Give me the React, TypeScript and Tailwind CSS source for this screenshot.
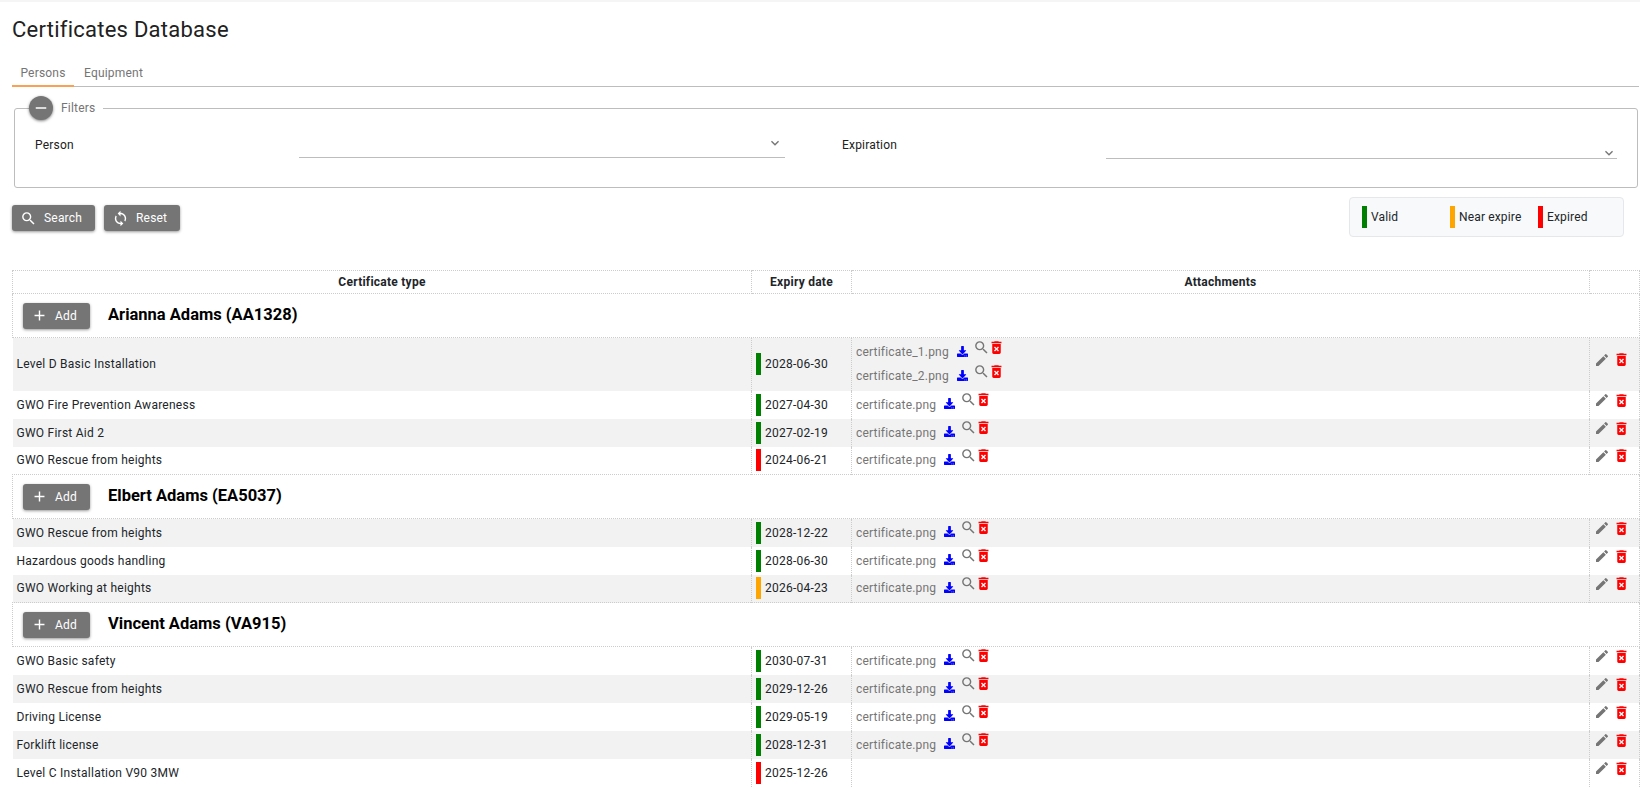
import React from "react";
import { MdAdd, MdDeleteForever, MdEdit, MdRemove, MdSearch, MdSync, MdKeyboardArrowDown } from "react-icons/md";
import { FaDownload } from "react-icons/fa";

type Row = { name: string; status: "g" | "o" | "r"; date: string; files: string[]; gray: boolean };
type Group = { person: string; rows: Row[] };

const barClass = { g: "bg-[#008000]", o: "bg-[#ffa500]", r: "bg-[#ff0000]" };

const groups: Group[] = [
  {
    person: "Arianna Adams (AA1328)",
    rows: [
      { name: "Level D Basic Installation", status: "g", date: "2028-06-30", files: ["certificate_1.png", "certificate_2.png"], gray: true },
      { name: "GWO Fire Prevention Awareness", status: "g", date: "2027-04-30", files: ["certificate.png"], gray: false },
      { name: "GWO First Aid 2", status: "g", date: "2027-02-19", files: ["certificate.png"], gray: true },
      { name: "GWO Rescue from heights", status: "r", date: "2024-06-21", files: ["certificate.png"], gray: false },
    ],
  },
  {
    person: "Elbert Adams (EA5037)",
    rows: [
      { name: "GWO Rescue from heights", status: "g", date: "2028-12-22", files: ["certificate.png"], gray: true },
      { name: "Hazardous goods handling", status: "g", date: "2028-06-30", files: ["certificate.png"], gray: false },
      { name: "GWO Working at heights", status: "o", date: "2026-04-23", files: ["certificate.png"], gray: true },
    ],
  },
  {
    person: "Vincent Adams (VA915)",
    rows: [
      { name: "GWO Basic safety", status: "g", date: "2030-07-31", files: ["certificate.png"], gray: false },
      { name: "GWO Rescue from heights", status: "g", date: "2029-12-26", files: ["certificate.png"], gray: true },
      { name: "Driving License", status: "g", date: "2029-05-19", files: ["certificate.png"], gray: false },
      { name: "Forklift license", status: "g", date: "2028-12-31", files: ["certificate.png"], gray: true },
      { name: "Level C Installation V90 3MW", status: "r", date: "2025-12-26", files: [], gray: false },
    ],
  },
];

function Btn({ icon, label, w }: { icon: React.ReactNode; label: string; w: string }) {
  return (
    <button className={`flex h-[26px] items-center gap-[7px] rounded-[3px] bg-[#757575] pl-[8px] text-[12px] tracking-[0.2px] text-white shadow-[0_1px_3px_rgba(0,0,0,0.4)] ${w}`}>
      {icon}
      <span>{label}</span>
    </button>
  );
}

function File({ name }: { name: string }) {
  return (
    <div className="flex h-[24px] items-center">
      <span className="text-[12px] tracking-[0.2px] text-[#757575]">{name}</span>
      <FaDownload className="ml-[8px] -mt-[2px] text-[#0000ff]" size={11} />
      <MdSearch className="ml-[5px] -mt-[10px] text-[#757575]" size={17} />
      <MdDeleteForever className="-ml-[2px] -mt-[10px] text-[#ff0000]" size={17} />
    </div>
  );
}

export default function App() {
  return (
    <div className="h-[787px] overflow-hidden bg-white font-['Roboto',sans-serif] text-[#212529]">
      <div className="h-[2px] bg-[#f5f5f5]" />
      <div className="pl-[12px] pr-[1px]">
        <h1 className="mt-[14px] h-[28px] text-[22px] leading-[28px] tracking-[0.25px] text-[#212121]">Certificates Database</h1>
        <div className="mt-[16px] flex h-[27px] border-b border-[#bdbdbd] text-[12px] tracking-[0.2px] text-[#757575]">
          <div className="flex h-[27px] w-[62px] items-center justify-center border-b-2 border-[#f9a155] pt-[1px]">Persons</div>
          <div className="flex h-[26px] w-[79px] items-center justify-center">Equipment</div>
        </div>

        <fieldset className="ml-[2px] mr-[2px] mt-[15px] h-[86px] rounded-[3px] border border-[#bdbdbd] px-[20px]">
          <legend className="-ml-[6px] flex h-[12px] items-center pr-[8px]">
            <span className="flex h-[24px] w-[24px] items-center justify-center rounded-full bg-[#757575] text-white shadow-[0_1px_3px_rgba(0,0,0,0.5)]">
              <MdRemove size={18} />
            </span>
            <span className="ml-[8px] text-[12px] tracking-[0.2px] text-[#757575]">Filters</span>
          </legend>
          <div className="flex text-[12px] tracking-[0.2px] text-[#212121]">
            <div className="flex w-[807px]">
              <div className="mt-[22px] w-[264px]">Person</div>
              <div className="mt-[11px] flex h-[33px] w-[486px] items-start justify-end border-b border-[#bdbdbd] pr-[2px] pt-[10px]">
                <MdKeyboardArrowDown className="text-[#757575]" size={16} />
              </div>
            </div>
            <div className="flex">
              <div className="mt-[22px] w-[264px]">Expiration</div>
              <div className="mt-[11px] h-[34px] w-[511px] border-b border-[#bdbdbd]">
                <div className="flex justify-end pt-[20px]">
                  <MdKeyboardArrowDown className="text-[#757575]" size={16} />
                </div>
              </div>
            </div>
          </div>
        </fieldset>

        <div className="mt-[9px] flex items-start justify-between pr-[15px]">
          <div className="mt-[8px] flex gap-[9px]">
            <Btn w="w-[83px]" icon={<MdSearch size={17} />} label="Search" />
            <Btn w="w-[76px]" icon={<MdSync size={17} />} label="Reset" />
          </div>
          <div className="flex h-[40px] w-[275px] items-center rounded-[4px] border border-[#e5e7eb] bg-[#f8f9fa] pl-[12px] text-[12px] tracking-[0.15px]">
            <div className="flex w-[88px] items-center gap-[4px]"><span className="h-[22px] w-[5px] bg-[#008000]" />Valid</div>
            <div className="flex w-[88px] items-center gap-[4px]"><span className="h-[22px] w-[5px] bg-[#ffa500]" />Near expire</div>
            <div className="flex items-center gap-[4px]"><span className="h-[22px] w-[5px] bg-[#ff0000]" />Expired</div>
          </div>
        </div>

        <table className="mt-[33px] w-[1627px] table-fixed border-collapse text-[12px] tracking-[0.25px]">
          <colgroup>
            <col className="w-[739px]" />
            <col className="w-[100px]" />
            <col className="w-[738px]" />
            <col className="w-[50px]" />
          </colgroup>
          <thead>
            <tr className="h-[23px] font-bold">
              <th className="border border-dotted border-[#ccc] text-[12px] font-bold">Certificate type</th>
              <th className="border border-dotted border-[#ccc] font-bold">Expiry date</th>
              <th className="border border-dotted border-[#ccc] font-bold">Attachments</th>
              <th className="border border-dotted border-[#ccc]" />
            </tr>
          </thead>
          {groups.map((g) => (
            <tbody key={g.person}>
              <tr className="h-[44px]">
                <td colSpan={4} className="border border-dotted border-[#ccc] pl-[10px]">
                  <div className="flex items-center">
                    <Btn w="w-[67px]" icon={<MdAdd size={17} />} label="Add" />
                    <span className="ml-[18px] text-[16.5px] font-bold tracking-normal text-black">{g.person}</span>
                  </div>
                </td>
              </tr>
              {g.rows.map((r) => (
                <tr key={r.name} className={r.gray ? "bg-[#f2f2f2]" : "bg-white"}>
                  <td className={`pl-[4px] ${r.files.length > 1 ? "h-[53px]" : "h-[28px]"}`}>{r.name}</td>
                  <td className="border-x border-dotted border-[#ccc] pl-[4px]">
                    <div className="flex items-center gap-[3px]">
                      <span className={`h-[22px] w-[5px] ${barClass[r.status]}`} />
                      <span className="pl-[1px]">{r.date}</span>
                    </div>
                  </td>
                  <td className="pl-[4px]">
                    {r.files.map((f) => (
                      <File key={f} name={f} />
                    ))}
                  </td>
                  <td className="border-x border-dotted border-[#ccc] pl-[4px]">
                    <div className="-mt-[9px] flex items-center gap-[3px]">
                      <MdEdit className="text-[#757575]" size={16} />
                      <MdDeleteForever className="text-[#ff0000]" size={17} />
                    </div>
                  </td>
                </tr>
              ))}
            </tbody>
          ))}
        </table>
      </div>
    </div>
  );
}
